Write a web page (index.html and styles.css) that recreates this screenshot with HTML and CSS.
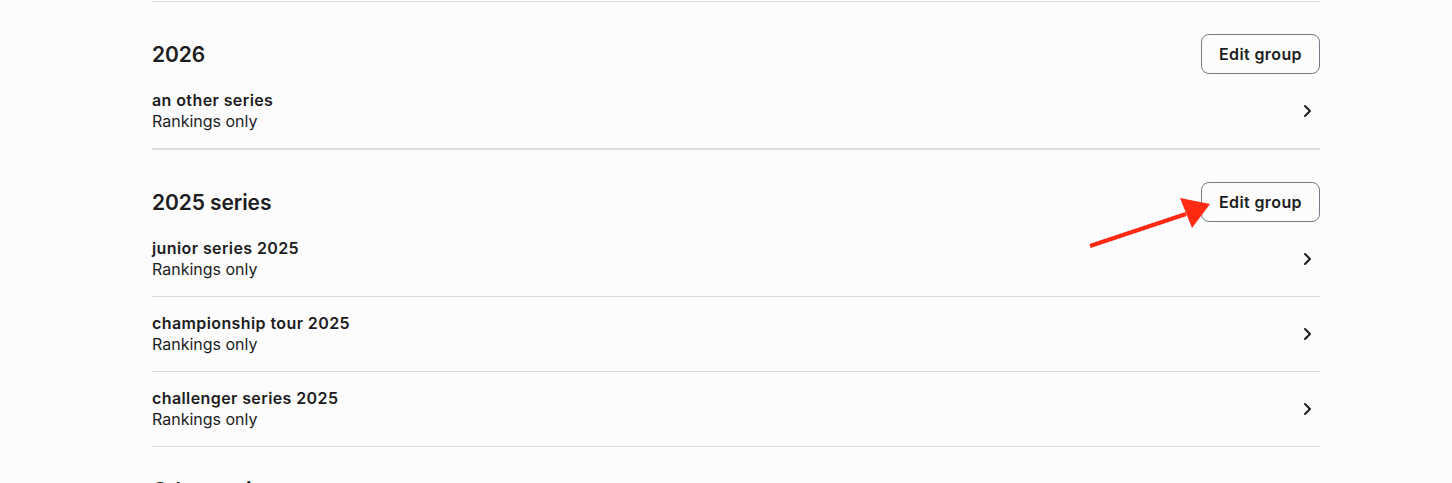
FILE: index.html
```html
<!DOCTYPE html>
<html lang="en">
<head>
  <meta charset="UTF-8" />
  <meta name="viewport" content="width=device-width, initial-scale=1.0"/>
  <title>Series</title>
  <link rel="stylesheet" href="styles.css">
</head>
<body>

  <div class="page">

    <section class="group">
      <div class="group-head">
        <h2>2026</h2>
        <button class="edit-btn">Edit group</button>
      </div>
      <ul class="series-list">
        <li>
          <div class="series-text">
            <span class="series-name">an other series</span>
            <span class="series-type">Rankings only</span>
          </div>
          <svg class="chevron" viewBox="0 0 10 14" width="10" height="14"><path d="M3 2l5 5-5 5"/></svg>
        </li>
      </ul>
    </section>

    <section class="group">
      <div class="group-head">
        <h2>2025 series</h2>
        <button class="edit-btn">Edit group</button>
      </div>
      <ul class="series-list">
        <li>
          <div class="series-text">
            <span class="series-name">junior series 2025</span>
            <span class="series-type">Rankings only</span>
          </div>
          <svg class="chevron" viewBox="0 0 10 14" width="10" height="14"><path d="M3 2l5 5-5 5"/></svg>
        </li>
        <li>
          <div class="series-text">
            <span class="series-name">championship tour 2025</span>
            <span class="series-type">Rankings only</span>
          </div>
          <svg class="chevron" viewBox="0 0 10 14" width="10" height="14"><path d="M3 2l5 5-5 5"/></svg>
        </li>
        <li>
          <div class="series-text">
            <span class="series-name">challenger series 2025</span>
            <span class="series-type">Rankings only</span>
          </div>
          <svg class="chevron" viewBox="0 0 10 14" width="10" height="14"><path d="M3 2l5 5-5 5"/></svg>
        </li>
      </ul>
    </section>

    <section class="group last">
      <div class="group-head">
        <h2>Other series</h2>
      </div>
    </section>

    <!-- annotation arrow pointing at the second Edit group button -->
    <svg class="arrow" width="140" height="60" viewBox="0 0 140 60">
      <line x1="4" y1="54" x2="100" y2="22" />
      <polygon points="124,12 94,6 106,36" />
    </svg>

  </div>

</body>
</html>
```

FILE: styles.css
```css
* {
  box-sizing: border-box;
}

body {
  font-family: Inter, "Noto Sans", sans-serif;
  margin: 0;
  background: #fcfcfc;
  color: #1d1d1f;
}

.page {
  position: relative;
  width: 1168px;
  margin: 0 0 0 152px;
  padding-top: 1px;
}

.group {
  border-top: 1px solid #dcdce3;
  padding-top: 32px;
}

.group-head {
  display: flex;
  justify-content: space-between;
  align-items: center;
}

.group-head h2 {
  margin: 0;
  font-size: 21px;
  font-weight: 600;
  letter-spacing: -0.1px;
}

.edit-btn {
  height: 40px;
  padding: 0 17px;
  background: transparent;
  border: 1px solid #737b87;
  border-radius: 8px;
  font-family: inherit;
  font-size: 16px;
  font-weight: 600;
  color: #1d1d1f;
  letter-spacing: 0.4px;
  cursor: pointer;
}

.series-list {
  list-style: none;
  margin: 0;
  padding: 0;
}

.series-list li {
  display: flex;
  justify-content: space-between;
  align-items: center;
  padding: 16px 0;
  border-bottom: 1px solid #dcdce3;
}

.series-text {
  display: flex;
  flex-direction: column;
}

.series-name {
  font-size: 16px;
  font-weight: 600;
  line-height: 21px;
  letter-spacing: 0.4px;
}

.series-type {
  font-size: 16px;
  line-height: 21px;
}

.chevron {
  margin-right: 8px;
}

.chevron path {
  fill: none;
  stroke: #1d1d1f;
  stroke-width: 2;
  stroke-linecap: round;
  stroke-linejoin: round;
}

.group.last {
  border-top: none;
  padding-top: 31px;
}

.arrow {
  position: absolute;
  left: 934px;
  top: 192px;
}

.arrow line {
  stroke: #ff2a12;
  stroke-width: 4;
}

.arrow polygon {
  fill: #ff2a12;
}
```
